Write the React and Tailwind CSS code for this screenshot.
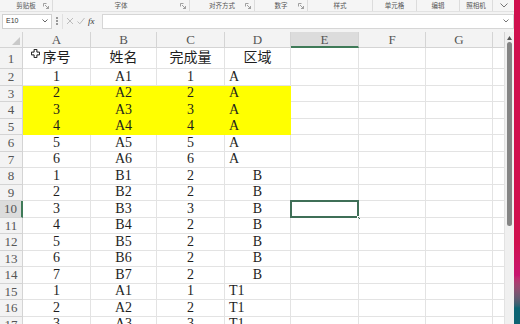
import React from "react";

const colW = ["w-[68px]", "w-[66px]", "w-[68px]", "w-[66px]", "w-[68px]", "w-[67px]", "w-[67px]", "w-[12px]"];
const colNames = ["A", "B", "C", "D", "E", "F", "G", ""];

const rows = [
    ["序号", "姓名", "完成量", "区域"],
    ["1", "A1", "1", "A"],
    ["2", "A2", "2", "A"],
    ["3", "A3", "3", "A"],
    ["4", "A4", "4", "A"],
    ["5", "A5", "5", "A"],
    ["6", "A6", "6", "A"],
    ["1", "B1", "2", "B"],
    ["2", "B2", "2", "B"],
    ["3", "B3", "3", "B"],
    ["4", "B4", "2", "B"],
    ["5", "B5", "2", "B"],
    ["6", "B6", "2", "B"],
    ["7", "B7", "2", "B"],
    ["1", "A1", "1", "T1"],
    ["2", "A2", "2", "T1"],
    ["3", "A3", "3", "T1"],
];

const groups = [
    { label: "剪贴板", w: "w-[53px]", launcher: true },
    { label: "字体", w: "w-[137px]", launcher: true },
    { label: "对齐方式", w: "w-[65px]", launcher: true },
    { label: "数字", w: "w-[53px]", launcher: true },
    { label: "样式", w: "w-[65px]", launcher: false },
    { label: "单元格", w: "w-[44px]", launcher: false },
    { label: "编辑", w: "w-[43px]", launcher: false },
    { label: "照相机", w: "w-[33px]", launcher: false },
];

const Launcher = () => (
    <svg width="6" height="6" viewBox="0 0 6 6" className="absolute right-[3px] top-[3px]">
        <path d="M0.5 0.5h3M0.5 0.5v3M2 2l3.5 3.5M5.5 3v2.5H3" stroke="#8a8a8a" strokeWidth="0.8" fill="none" />
    </svg>
);

// the white "move" cross the mouse pointer shows over a cell
const MoveCursor = () => (
    <svg width="9" height="9" viewBox="0 0 11 11" className="absolute left-[8px] top-[1px]">
        <path d="M3.8 0.5h3.4v3.3h3.3v3.4H7.2v3.3H3.8V7.2H0.5V3.8h3.3z" fill="#fff" stroke="#111" strokeWidth="1.2" />
    </svg>
);

const Cell = ({ ci, ri, value }) => {
    const yellow = ri >= 2 && ri <= 4 && ci < 4;
    const selected = ri === 9 && ci === 4;
    let align = "justify-center";
    if (ci === 3 && ri > 0 && value !== "B") align = "justify-start pl-[4px]";
    return (
        <div
            className={`${colW[ci]} shrink-0 relative flex items-center ${align} border-r border-b ${yellow ? "bg-[#ffff00] border-[#ffff00]" : "border-[#e3e3e3]"}`}
        >
            {ri === 0 && ci === 0 && <MoveCursor />}
            <span className="leading-none">{value}</span>
            {selected && (
                <>
                    <div className="absolute -left-px -top-px -right-px -bottom-px border-2 border-[#3f6f57]" />
                    <div className="absolute -right-[3px] -bottom-[3px] w-[4px] h-[4px] bg-[#3f6f57] border border-white" />
                </>
            )}
        </div>
    );
};

export default function App() {
    return (
        <div className="w-[520px] h-[324px] overflow-hidden flex bg-[#f3f3f3] font-['Liberation_Serif','Noto_Sans_CJK_SC',serif]">
            <div className="w-[514px] flex flex-col">
                {/* Ribbon group labels */}
                <div className="h-[12px] flex items-center bg-[#f5f5f5] border-b border-[#e2e2e2] font-['Noto_Sans_CJK_SC',sans-serif] text-[6.5px] text-[#555]">
                    {groups.map((g) => (
                        <div key={g.label} className={`${g.w} h-full relative flex items-center justify-center border-r border-[#dcdcdc]`}>
                            <span className="leading-none">{g.label}</span>
                            {g.launcher && <Launcher />}
                        </div>
                    ))}
                    <div className="flex-1 flex items-center justify-center text-[#666]">
                        <svg width="8" height="5" viewBox="0 0 8 5">
                            <path d="M0.5 0.5l3.5 3.5 3.5-3.5" stroke="#666" strokeWidth="0.9" fill="none" />
                        </svg>
                    </div>
                </div>

                {/* Formula bar */}
                <div className="h-[18px] flex items-center pl-[2px] gap-[4px] font-['Liberation_Sans',sans-serif]">
                    <div className="w-[50px] h-[15px] bg-white border border-[#d0d0d0] flex items-center justify-between px-[3px] text-[7px] text-[#333]">
                        <span>E10</span>
                        <svg width="6" height="4" viewBox="0 0 6 4">
                            <path d="M0.5 0.5l2.5 2.5 2.5-2.5" stroke="#555" strokeWidth="0.9" fill="none" />
                        </svg>
                    </div>
                    <div className="flex flex-col gap-[1.5px]">
                        <div className="w-[1.5px] h-[1.5px] bg-[#999]" />
                        <div className="w-[1.5px] h-[1.5px] bg-[#999]" />
                        <div className="w-[1.5px] h-[1.5px] bg-[#999]" />
                    </div>
                    <div className="h-[15px] w-[36px] flex items-center justify-between px-[3px] border-l border-[#e0e0e0]">
                        <svg width="8" height="8" viewBox="0 0 8 8">
                            <path d="M1 1l6 6M7 1L1 7" stroke="#b5b5b5" strokeWidth="0.9" />
                        </svg>
                        <svg width="8" height="8" viewBox="0 0 8 8">
                            <path d="M0.5 4.5l2.3 2.3L7.5 1" stroke="#b5b5b5" strokeWidth="0.9" fill="none" />
                        </svg>
                        <span className="font-['Liberation_Serif',serif] italic text-[9px] text-[#333] leading-none">fx</span>
                    </div>
                    <div className="flex-1 h-[15px] bg-white border border-[#d6d6d6] flex items-center justify-end pr-[4px]">
                        <svg width="6" height="4" viewBox="0 0 6 4">
                            <path d="M0.5 0.5l2.5 2.5 2.5-2.5" stroke="#666" strokeWidth="0.9" fill="none" />
                        </svg>
                    </div>
                </div>

                <div className="h-[2px]" />

                {/* Sheet */}
                <div className="flex-1 flex overflow-hidden">
                    <div className="w-[505px] flex flex-col overflow-hidden bg-white">
                        {/* Column headers */}
                        <div className="h-[16px] flex shrink-0 bg-[#f3f3f3] text-[13px] text-[#555]">
                            <div className="w-[23px] shrink-0 relative border-r border-b border-[#d4d4d4]">
                                <svg width="8" height="8" viewBox="0 0 8 8" className="absolute right-[2px] bottom-[2px]">
                                    <path d="M8 0V8H0z" fill="#c9c9c9" />
                                </svg>
                            </div>
                            {colNames.map((c, ci) => (
                                <div
                                    key={ci}
                                    className={`${colW[ci]} shrink-0 flex items-center justify-center border-r ${ci === 4 ? "bg-[#dcdcdc] border-b-2 border-b-[#3f7a58] border-r-[#d4d4d4]" : "border-b border-[#d4d4d4]"}`}
                                >
                                    <span className="leading-none">{c}</span>
                                </div>
                            ))}
                        </div>

                        {/* Rows */}
                        {rows.map((r, ri) => (
                            <div key={ri} className={`${ri === 0 ? "h-[21px]" : "h-[16.5px]"} flex shrink-0 text-[14px] text-[#1e1e1e]`}>
                                <div
                                    className={`w-[23px] shrink-0 flex items-center justify-center border-b text-[13px] text-[#555] ${ri === 9 ? "bg-[#dcdcdc] border-r-2 border-r-[#3f7a58] border-b-[#d4d4d4]" : "bg-[#f3f3f3] border-r border-[#d4d4d4]"}`}
                                >
                                    <span className="leading-none">{ri + 1}</span>
                                </div>
                                {colNames.map((_, ci) => (
                                    <Cell key={ci} ci={ci} ri={ri} value={r[ci] || ""} />
                                ))}
                            </div>
                        ))}
                    </div>

                    {/* Vertical scrollbar */}
                    <div className="flex-1 bg-[#f0f0f0] flex flex-col items-center pt-[4px] gap-[2px]">
                        <svg width="5" height="4" viewBox="0 0 5 4">
                            <path d="M2.5 0L5 4H0z" fill="#555" />
                        </svg>
                        <div className="w-[5px] h-[184px] rounded-full bg-[#858585]" />
                    </div>
                </div>
            </div>

            {/* desktop edge */}
            <div className="flex-1 bg-linear-to-b from-[#d0104e] from-75% via-[#c81570] via-85% to-[#0d6473] to-95%" />
        </div>
    );
}
